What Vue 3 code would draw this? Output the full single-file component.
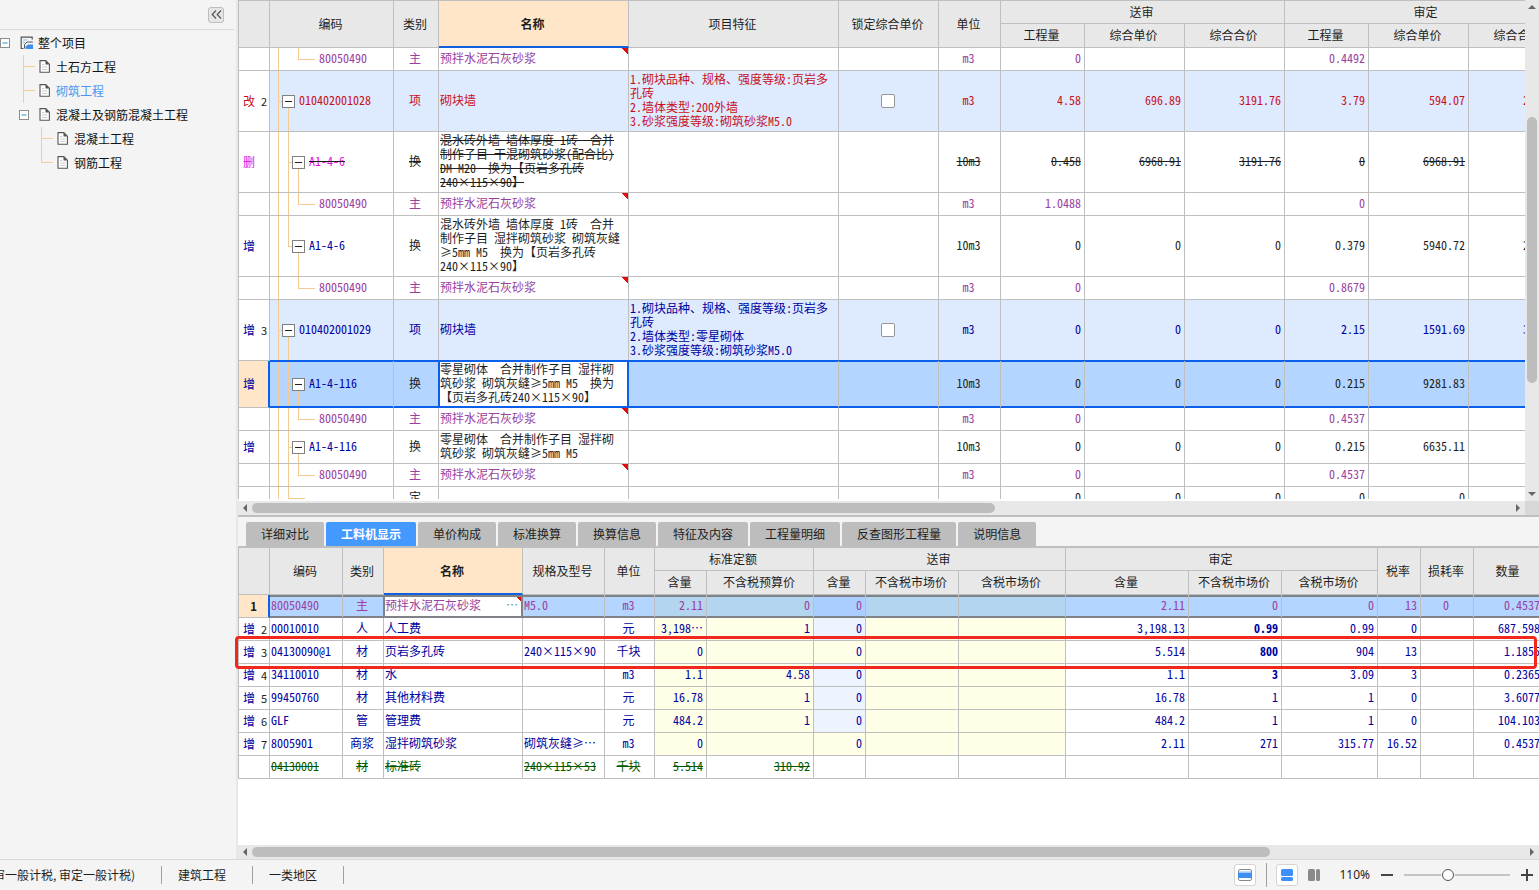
<template>
  <div class="app">
    <div class="workspace">
      <aside class="sidebar">
        <div class="sidebar-head">
          <button class="collapse-btn" type="button" aria-label="收起">
            <svg width="11" height="9" viewBox="0 0 11 9">
              <path d="M5 0.5 1.2 4.5 5 8.5M10 0.5 6.2 4.5 10 8.5" fill="none" stroke="#555" stroke-width="1.2" />
            </svg>
          </button>
        </div>
        <ul class="tree">
          <li v-for="node in treeNodes" :key="node.label" :class="['node', 'level-' + node.level]">
            <button v-if="node.toggle" class="node-toggle" type="button" :aria-label="node.label">
              <svg width="10" height="10" viewBox="0 0 10 10">
                <rect x="0.5" y="0.5" width="9" height="9" fill="#fff" stroke="#8f8f8f" />
                <path d="M2.5 5h5" stroke="#2f8fd0" />
              </svg>
            </button>
            <svg v-else class="node-guide" width="18" height="24" viewBox="0 0 18 24">
              <path :d="node.last ? 'M5.5 0V11.5H17' : 'M5.5 0V24M5.5 11.5H17'" fill="none" stroke="#f5cd94" />
            </svg>
            <svg v-if="node.level === 0" class="node-icon root-icon" width="14" height="14" viewBox="0 0 14 14">
              <path d="M3.5 12.5H1.2V1.2H12.2V3.5" fill="none" stroke="#555" stroke-width="1.2" />
              <path d="M3 4h4M3 6.5h2" stroke="#7db8f5" />
              <path d="M4.5 12.5V8.5L7 6h5.8" fill="none" stroke="#555" />
              <path d="M5.5 13V10.5L8 8.5h5V13z" fill="#3f8ff0" />
            </svg>
            <svg v-else class="node-icon" width="12" height="13" viewBox="0 0 12 13">
              <path d="M1 0.6H6.8L10.4 4.2V12.3H1z" fill="#fff" stroke="#555" stroke-width="1.1" />
              <path d="M6.5 0.5V4.5H10.5z" fill="#555" />
              <path d="M3 4.5h2M3 7h5.5M3 9.5h5.5" stroke="#ccc" />
            </svg>
            <a href="#" :class="['node-label', { active: node.active }]">{{ node.label }}</a>
          </li>
        </ul>
      </aside>

      <main class="main">
        <section class="pane-top">
          <div class="grid-view">
            <table class="grid">
              <colgroup>
                <col v-for="(w, i) in topWidths" :key="i" :style="{ width: w + 'px' }" />
              </colgroup>
              <thead>
                <tr>
                  <th rowspan="2"></th>
                  <th rowspan="2">编码</th>
                  <th rowspan="2">类别</th>
                  <th rowspan="2" class="current">名称</th>
                  <th rowspan="2">项目特征</th>
                  <th rowspan="2">锁定综合单价</th>
                  <th rowspan="2">单位</th>
                  <th colspan="3">送审</th>
                  <th colspan="3">审定</th>
                </tr>
                <tr class="sub">
                  <th v-for="(t, i) in topSub" :key="i">{{ t }}</th>
                </tr>
              </thead>
              <tbody>
                <tr v-for="(row, i) in topRows" :key="i" :class="[row.tone, { item: row.level === 1, selected: row.selected, struck: row.struck }]">
                  <td class="flag-cell">
                    <div class="flag"><span :class="row.flagTone">{{ row.flag }}</span><span class="no">{{ row.no }}</span></div>
                  </td>
                  <td :class="['code', row.guide]">
                    <div :class="['code-inner', 'indent-' + row.level]">
                      <button v-if="row.level < 3" class="fold" type="button" aria-label="折叠"></button>
                      <span :class="['code-text', row.codeTone]">{{ row.code }}</span>
                    </div>
                  </td>
                  <td class="center">{{ row.kind }}</td>
                  <td :class="['name', { note: row.level === 3 }]">{{ row.name }}</td>
                  <td class="name">{{ row.feature }}</td>
                  <td class="center"><input v-if="row.level === 1" type="checkbox" class="check" aria-label="锁定综合单价" /></td>
                  <td class="center">{{ row.unit }}</td>
                  <td v-for="(v, n) in row.values" :key="n" class="num">{{ v }}</td>
                </tr>
              </tbody>
            </table>
          </div>
          <div class="vbar">
            <svg width="8" height="4" viewBox="0 0 8 4"><path d="M4 0 8 4H0z" fill="#666" /></svg>
            <div class="vtrack"><div class="vthumb"></div></div>
            <svg width="8" height="4" viewBox="0 0 8 4"><path d="M0 0H8L4 4z" fill="#666" /></svg>
          </div>
          <div class="hbar">
            <svg width="4" height="8" viewBox="0 0 4 8"><path d="M4 0V8L0 4z" fill="#666" /></svg>
            <div class="htrack"><div class="hthumb thumb-top"></div></div>
            <svg width="4" height="8" viewBox="0 0 4 8"><path d="M0 0V8L4 4z" fill="#666" /></svg>
          </div>
          <div class="corner"></div>
        </section>

        <nav class="tabs">
          <button v-for="t in tabs" :key="t" type="button" :class="['tab', { active: t === activeTab }]" @click="activeTab = t">{{ t }}</button>
        </nav>

        <section class="pane-bottom">
          <div class="grid-view">
            <table class="grid detail">
              <colgroup>
                <col v-for="(w, i) in bottomWidths" :key="i" :style="{ width: w + 'px' }" />
              </colgroup>
              <thead>
                <tr>
                  <th rowspan="2"></th>
                  <th rowspan="2">编码</th>
                  <th rowspan="2">类别</th>
                  <th rowspan="2" class="current">名称</th>
                  <th rowspan="2">规格及型号</th>
                  <th rowspan="2">单位</th>
                  <th colspan="2">标准定额</th>
                  <th colspan="3">送审</th>
                  <th colspan="3">审定</th>
                  <th rowspan="2">税率</th>
                  <th rowspan="2">损耗率</th>
                  <th rowspan="2">数量</th>
                </tr>
                <tr class="sub">
                  <th v-for="(t, i) in bottomSub" :key="i">{{ t }}</th>
                </tr>
              </thead>
              <tbody>
                <tr v-for="(row, i) in bottomRows" :key="i" :class="[row.tone, { editing: i === 0, struck: row.struck }]">
                  <td class="flag-cell">
                    <div class="flag"><span class="add">{{ row.flag }}</span><span class="no">{{ row.no }}</span></div>
                  </td>
                  <td>{{ row.code }}</td>
                  <td class="center">{{ row.kind }}</td>
                  <td :class="{ note: i === 0, edit: i === 0 }">
                    <div class="edit-inner">{{ row.name }}<button v-if="i === 0" class="more" type="button">…</button></div>
                  </td>
                  <td>{{ row.spec }}</td>
                  <td class="center">{{ row.unit }}</td>
                  <td v-for="(v, n) in row.values" :key="n" :class="cellClass(row, n)">{{ v }}</td>
                </tr>
              </tbody>
            </table>
          </div>
          <div class="hbar">
            <svg width="4" height="8" viewBox="0 0 4 8"><path d="M4 0V8L0 4z" fill="#666" /></svg>
            <div class="htrack"><div class="hthumb thumb-bottom"></div></div>
            <svg width="4" height="8" viewBox="0 0 4 8"><path d="M0 0V8L4 4z" fill="#666" /></svg>
          </div>
          <div class="highlight"></div>
        </section>
      </main>
    </div>

    <footer class="status">
      <div class="status-item tax"><span>送审一般计税, 审定一般计税)</span></div>
      <div class="status-item">建筑工程</div>
      <div class="status-item">一类地区</div>
      <div class="tools">
        <button class="tool framed" type="button" aria-label="单窗格">
          <svg width="14" height="12" viewBox="0 0 14 12">
            <rect x="0.5" y="0.5" width="13" height="11" rx="1.5" fill="#fff" stroke="#8a8a8a" />
            <path d="M0 3.5H14V9H0z" fill="#3f8ff0" />
            <path d="M1 2.8h12" stroke="#a9d0ff" />
          </svg>
        </button>
        <span class="tool-sep"></span>
        <button class="tool framed" type="button" aria-label="上下布局">
          <svg width="12" height="12" viewBox="0 0 12 12">
            <rect width="12" height="7" rx="1.5" fill="#3f8ff8" />
            <rect y="8" width="12" height="4" rx="1.5" fill="#3f8ff8" />
          </svg>
        </button>
        <button class="tool" type="button" aria-label="左右布局">
          <svg width="12" height="12" viewBox="0 0 12 12">
            <rect width="7" height="12" rx="1.5" fill="#8a8a8a" />
            <rect x="8" width="4" height="12" rx="1.5" fill="#8a8a8a" />
          </svg>
        </button>
        <span class="zoom-text">110%</span>
        <button class="zoom-btn" type="button" aria-label="缩小">
          <svg width="12" height="12" viewBox="0 0 12 12"><path d="M0 6H12" stroke="#444" stroke-width="2" /></svg>
        </button>
        <input v-model="zoom" class="zoom-range" type="range" min="0" max="100" aria-label="缩放" />
        <button class="zoom-btn" type="button" aria-label="放大">
          <svg width="12" height="12" viewBox="0 0 12 12"><path d="M0 6H12M6 0V12" stroke="#444" stroke-width="2" /></svg>
        </button>
      </div>
    </footer>
  </div>
</template>

<script setup>
import { ref } from "vue";

const zoom = ref(40);
const activeTab = ref("工料机显示");
const tabs = ["详细对比", "工料机显示", "单价构成", "标准换算", "换算信息", "特征及内容", "工程量明细", "反查图形工程量", "说明信息"];

const treeNodes = [
  { label: "整个项目", level: 0, toggle: true },
  { label: "土石方工程", level: 1 },
  { label: "砌筑工程", level: 1, active: true },
  { label: "混凝土及钢筋混凝土工程", level: 1, toggle: true },
  { label: "混凝土工程", level: 2 },
  { label: "钢筋工程", level: 2, last: true },
];

const topWidths = [32, 124, 45, 190, 210, 100, 62, 84, 100, 100, 84, 100, 100];
const topSub = ["工程量", "综合单价", "综合合价", "工程量", "综合单价", "综合合价"];

// 主材行
const material = (guide, a, b) => ({
  level: 3, guide, tone: "purple", code: "80050490", kind: "主", name: "预拌水泥石灰砂浆", unit: "m3",
  values: [a, "", "", b, "", ""],
});

const topRows = [
  material("leaf", "0", "0.4492"),
  {
    level: 1, guide: "open-1", tone: "red", flag: "改", flagTone: "red", no: 2, code: "010402001028", kind: "项", name: "砌块墙",
    feature: "1.砌块品种、规格、强度等级:页岩多\n孔砖\n2.墙体类型:200外墙\n3.砂浆强度等级:砌筑砂浆M5.0",
    unit: "m3", values: ["4.58", "696.89", "3191.76", "3.79", "594.07", "2251.53"],
  },
  {
    level: 2, guide: "open-2", struck: true, flag: "删", flagTone: "magenta", code: "A1-4-6", codeTone: "magenta", kind: "换",
    name: "混水砖外墙 墙体厚度 1砖  合并\n制作子目 干混砌筑砂浆(配合比)\nDM M20  换为【页岩多孔砖\n240×115×90】",
    unit: "10m3", values: ["0.458", "6968.91", "3191.76", "0", "6968.91", ""],
  },
  material("leaf-more", "1.0488", "0"),
  {
    level: 2, guide: "open-2-last", flag: "增", flagTone: "add", code: "A1-4-6", codeTone: "add", kind: "换",
    name: "混水砖外墙 墙体厚度 1砖  合并\n制作子目 湿拌砌筑砂浆 砌筑灰缝\n≥5mm M5  换为【页岩多孔砖\n240×115×90】",
    unit: "10m3", values: ["0", "0", "0", "0.379", "5940.72", "2251.53"],
  },
  material("leaf", "0", "0.8679"),
  {
    level: 1, guide: "open-1", tone: "blue", flag: "增", flagTone: "add", no: 3, code: "010402001029", kind: "项", name: "砌块墙",
    feature: "1.砌块品种、规格、强度等级:页岩多\n孔砖\n2.墙体类型:零星砌体\n3.砂浆强度等级:砌筑砂浆M5.0",
    unit: "m3", values: ["0", "0", "0", "2.15", "1591.69", "3422.13"],
  },
  {
    level: 2, guide: "open-2", selected: true, flag: "增", flagTone: "add", code: "A1-4-116", codeTone: "add", kind: "换",
    name: "零星砌体  合并制作子目 湿拌砌\n筑砂浆 砌筑灰缝≥5mm M5  换为\n【页岩多孔砖240×115×90】",
    unit: "10m3", values: ["0", "0", "0", "0.215", "9281.83", ""],
  },
  material("leaf-more", "0", "0.4537"),
  {
    level: 2, guide: "open-2", flag: "增", flagTone: "add", code: "A1-4-116", codeTone: "add", kind: "换",
    name: "零星砌体  合并制作子目 湿拌砌\n筑砂浆 砌筑灰缝≥5mm M5",
    unit: "10m3", values: ["0", "0", "0", "0.215", "6635.11", ""],
  },
  material("leaf-more", "0", "0.4537"),
  { level: 4, guide: "tail", kind: "定", values: ["0", "0", "0", "0", "0", ""] },
];

const bottomWidths = [32, 73, 41, 139, 82, 50, 52, 107, 52, 93, 107, 123, 93, 96, 43, 53, 70];
const bottomSub = ["含量", "不含税预算价", "含量", "不含税市场价", "含税市场价", "含量", "不含税市场价", "含税市场价"];

const bottomRows = [
  { no: 1, tone: "purple", code: "80050490", kind: "主", name: "预拌水泥石灰砂浆", spec: "M5.0", unit: "m3", values: ["2.11", "0", "0", "", "", "2.11", "0", "0", "13", "0", "0.4537"] },
  { flag: "增", no: 2, tone: "blue", bold: true, code: "00010010", kind: "人", name: "人工费", unit: "元", values: ["3,198…", "1", "0", "", "", "3,198.13", "0.99", "0.99", "0", "", "687.598"] },
  { flag: "增", no: 3, tone: "blue", bold: true, fixed: true, code: "04130090@1", kind: "材", name: "页岩多孔砖", spec: "240×115×90", unit: "千块", values: ["0", "", "0", "", "", "5.514", "800", "904", "13", "", "1.1855"] },
  { flag: "增", no: 4, tone: "blue", bold: true, code: "34110010", kind: "材", name: "水", unit: "m3", values: ["1.1", "4.58", "0", "", "", "1.1", "3", "3.09", "3", "", "0.2365"] },
  { flag: "增", no: 5, tone: "blue", code: "99450760", kind: "材", name: "其他材料费", unit: "元", values: ["16.78", "1", "0", "", "", "16.78", "1", "1", "0", "", "3.6077"] },
  { flag: "增", no: 6, tone: "blue", code: "GLF", kind: "管", name: "管理费", unit: "元", values: ["484.2", "1", "0", "", "", "484.2", "1", "1", "0", "", "104.103"] },
  { flag: "增", no: 7, tone: "blue", fixed: true, code: "8005901", kind: "商浆", name: "湿拌砌筑砂浆", spec: "砌筑灰缝≥…", unit: "m3", values: ["0", "", "0", "", "", "2.11", "271", "315.77", "16.52", "", "0.4537"] },
  { tone: "green", struck: true, code: "04130001", kind: "材", name: "标准砖", spec: "240×115×53", unit: "千块", values: ["5.514", "310.92", "", "", "", "", "", "", "", "", ""] },
];

// 浅黄为只读列，浅蓝为送审含量列
function cellClass(row, n) {
  return {
    num: n !== 9,
    center: n === 9,
    readonly: !row.struck && (n < 5 && (n !== 2 || row.fixed)),
    amount: !row.struck && n === 2 && !row.fixed,
    strong: row.bold && n === 6,
  };
}
</script>

<style>
body {
  margin: 0;
}
</style>

<style scoped>
* {
  box-sizing: border-box;
}

.app {
  display: flex;
  flex-direction: column;
  height: 100vh;
  overflow: hidden;
  background: #f4f4f4;
  color: #1e1e1e;
  font-family: "Noto Sans CJK SC", sans-serif;
  font-size: 12px;
  line-height: 14px;
}

button {
  padding: 0;
  border: 0;
  background: none;
  color: inherit;
  font: inherit;
}

svg {
  display: block;
  flex: none;
}

.workspace {
  display: flex;
  flex: 1;
  min-height: 0;
}

/* 左侧工程树 */
.sidebar {
  flex: 0 0 238px;
  border-right: 2px solid #e8e8e8;
}

.sidebar-head {
  display: flex;
  align-items: center;
  justify-content: flex-end;
  height: 30px;
  margin-right: 2px;
  padding-right: 10px;
  border-bottom: 1px solid #dcdcdc;
}

.collapse-btn {
  display: flex;
  align-items: center;
  justify-content: center;
  width: 16px;
  height: 16px;
  border: 1px solid #bdbdbd;
  border-radius: 3px;
  background: #e6e6e6;
}

.tree {
  margin: 0;
  padding: 1px 0 0;
  list-style: none;
}

.node {
  display: flex;
  align-items: center;
  height: 24px;
}

.level-1 {
  padding-left: 18px;
}

.level-2 {
  padding-left: 36px;
}

.node-toggle,
.node-guide {
  flex: none;
  width: 18px;
}

.node-toggle {
  padding-left: 1px;
}

.level-0 .node-toggle {
  padding-left: 0;
}

.node-icon {
  margin: 0 5px 2px 3px;
}

.root-icon {
  margin: 0 4px 0 2px;
}

.node-label {
  color: #111;
  text-decoration: none;
  white-space: nowrap;
}

.node-label.active {
  color: #4a96f0;
}

/* 表格 */
.main {
  display: flex;
  flex: 1;
  flex-direction: column;
  min-width: 0;
}

.pane-top {
  display: grid;
  flex: 0 0 calc(60% + 1px);
  grid-template-rows: minmax(0, 1fr) 14px;
  grid-template-columns: minmax(0, 1fr) 14px;
  min-height: 0;
  border-bottom: 2px solid #bfbfbf;
  background: #fff;
}

.grid-view {
  min-height: 0;
  overflow: hidden;
}

.pane-top .grid-view {
  margin-bottom: 2px;
  border-top: 1px solid #bfbfbf;
}

.grid {
  width: 0;
  border-collapse: separate;
  border-spacing: 0;
  table-layout: fixed;
  font-family: "Noto Sans Mono CJK SC", "Noto Sans CJK SC", monospace;
}

.grid th,
.grid td {
  height: 23px;
  padding: 0 3px 0 1px;
  border-right: 1px solid #bfbfbf;
  border-bottom: 1px solid #bfbfbf;
  overflow: hidden;
  white-space: pre;
}

.grid td {
  padding-bottom: 2px;
  text-align: left;
}

.grid thead tr:first-child > :first-child,
.flag-cell {
  border-left: 1px solid #bfbfbf;
}

.grid th {
  background: #e8e8e8;
  font-weight: 400;
}

.grid .sub th {
  height: 24px;
  padding-bottom: 2px;
}

.grid th.current {
  border-bottom: 2px solid #1060e0;
  background: #ffe6c9;
  font-weight: 700;
}

.grid .flag-cell {
  padding: 0;
}

.grid .center {
  text-align: center;
}

.grid .num {
  text-align: right;
}

.grid .name {
  padding: 1px 0 3px 1px;
}

.grid .item td:not(.flag-cell) {
  background-color: #deeafd;
}

.purple {
  color: #9940a0;
}

.red {
  color: #c8101c;
}

.blue,
.add {
  color: #0000a0;
}

.magenta {
  color: #e010e0;
}

.green {
  color: #005a00;
}

.struck td:not(.flag-cell) {
  text-decoration: line-through;
}

.flag {
  display: flex;
  align-items: center;
  justify-content: space-between;
  padding: 0 2px 0 4px;
}

.no {
  color: #222;
  font-family: "Noto Sans CJK SC", sans-serif;
  font-size: 11px;
}

.grid .note {
  background-image: linear-gradient(to top right, transparent 50%, #e01010 50%);
  background-repeat: no-repeat;
  background-position: right top;
  background-size: 7px 6px;
}

/* 编码列的层级连线 */
.grid .code {
  --mid-size: 0;
  --mid-pos: 0;
  --deep-size: 0;
  --deep-pos: 0;
  --arm-size: 0;
  --arm-pos: 0;
  --line: linear-gradient(#f3cb92, #f3cb92);
  padding: 0;
  background-image: var(--line), var(--line), var(--line), var(--line);
  background-repeat: no-repeat;
  background-position: 8px 0, 18px var(--mid-pos), 28px var(--deep-pos), var(--arm-pos) 50%;
  background-size: 1px 100%, 1px var(--mid-size), 1px var(--deep-size), var(--arm-size) 1px;
}

.grid .leaf,
.grid .leaf-more {
  --deep-size: 50%;
  --arm-size: 17px;
  --arm-pos: 28px;
}

.grid .leaf-more {
  --mid-size: 100%;
}

.grid .open-1 {
  --mid-size: 50%;
  --mid-pos: 100%;
  --arm-size: 5px;
  --arm-pos: 8px;
}

.grid .open-2,
.grid .open-2-last {
  --mid-size: 100%;
  --deep-size: 50%;
  --deep-pos: 100%;
  --arm-size: 5px;
  --arm-pos: 18px;
}

.grid .open-2-last {
  --mid-size: 50%;
}

.grid .tail {
  --mid-size: 50%;
  --arm-size: 17px;
  --arm-pos: 18px;
}

.code-inner {
  display: flex;
  align-items: center;
  gap: 4px;
}

.code-text {
  padding-bottom: 2px;
}

.indent-1 {
  padding-left: 12px;
}

.indent-2 {
  padding-left: 22px;
}

.indent-3 {
  padding-left: 49px;
}

.fold {
  flex: none;
  width: 13px;
  height: 13px;
  border: 1px solid #808080;
  background: linear-gradient(#222, #222) center / 7px 1px no-repeat #fff;
}

.check {
  display: block;
  width: 14px;
  height: 14px;
  margin: 2px auto 0;
  border: 1px solid #969696;
  border-radius: 2px;
  background: #fff;
  appearance: none;
}

.selected td:not(.flag-cell) {
  border-bottom-color: #0a60e8;
  background-color: #b4d5ff;
  box-shadow: 0 -1px #0a60e8, inset 0 1px #0a60e8, inset 0 -1px #0a60e8;
}

.grid .selected .flag-cell {
  border-right: 2px solid #0a60e8;
  background: #ffe6c9;
}

.grid .selected td:nth-child(3) {
  border-right-color: #0a60e8;
}

.grid .selected td:nth-child(4) {
  border-right: 2px solid #0a60e8;
  background-color: #fff;
  box-shadow: 0 -1px #0a60e8, inset 1px 1px #0a60e8, inset 0 -1px #0a60e8;
}

/* 滚动条 */
.vbar,
.hbar {
  display: flex;
  align-items: center;
  background: #e8e8e8;
}

.vbar {
  flex-direction: column;
  padding: 5px 0;
}

.hbar {
  flex: none;
  height: 14px;
  padding: 0 5px;
}

.vtrack {
  flex: 1;
  width: 10px;
}

.vthumb {
  height: 55%;
  margin-top: 108px;
  border-radius: 5px;
  background: #bdbdbd;
}

.htrack {
  flex: 1;
  padding: 0 5px;
}

.hthumb {
  height: 10px;
  border-radius: 5px;
  background: #bdbdbd;
}

.thumb-top {
  width: 59%;
}

.thumb-bottom {
  width: 80%;
}

.corner {
  background: #d8d8d8;
}

/* 页签 */
.tabs {
  display: flex;
  flex: none;
  gap: 2px;
  padding: 5px 8px 0;
  border-bottom: 2px solid #bfbfbf;
}

.tab {
  height: 24px;
  padding: 0 15px;
  border-radius: 2px 2px 0 0;
  background: #bdbdbd;
  color: #222;
  white-space: nowrap;
}

.tab.active {
  background: #4499ff;
  color: #fff;
  font-weight: 700;
}

.pane-bottom {
  position: relative;
  display: flex;
  flex: 1;
  flex-direction: column;
  min-height: 0;
  padding-bottom: 1px;
  background: #fff;
}

.pane-bottom .grid-view {
  flex: 1;
}

.detail .readonly {
  background: #ffffe8;
}

.detail .amount {
  background: #edf3ff;
}

.detail .strong {
  font-weight: 700;
}

.detail .editing td:not(.flag-cell) {
  border-bottom-color: #7f8388;
  background-color: #b4d5ff;
  box-shadow: inset 0 2px #7f8388, inset 0 -1px #7f8388;
}

.detail .editing .flag-cell {
  border-right: 2px solid #1060e0;
  background: #ffe6c9;
}

.editing .flag {
  justify-content: center;
  padding: 0;
}

.editing .no {
  font-size: 12px;
  font-weight: 700;
}

.detail .editing td.readonly {
  background-color: #b3d5f0;
}

.detail .editing td.amount {
  background-color: #aaceff;
}

.detail .editing td:nth-child(3) {
  border-right-color: #7f8388;
}

.detail .editing td.edit {
  border-right: 2px solid #7f8388;
  background-color: #fff;
  box-shadow: inset 1px 2px #7f8388, inset 0 -1px #7f8388;
}

.edit-inner {
  display: flex;
  justify-content: space-between;
}

.struck .edit-inner {
  display: block;
}

.more {
  color: #5a8ca0;
}

.highlight {
  position: absolute;
  top: 88px;
  right: 2px;
  left: -3px;
  height: 33px;
  border: 3px solid #f0281e;
  border-radius: 4px;
  pointer-events: none;
}

/* 状态栏 */
.status {
  position: relative;
  display: flex;
  flex: none;
  align-items: center;
  height: 30px;
  background: #f4f4f4;
  box-shadow: 0 -1px #d8d8d8;
}

.status-item {
  flex: none;
  padding: 0 26px 0 16px;
  border-right: 1px solid #a0a0a0;
  line-height: 18px;
  white-space: nowrap;
}

.tax {
  display: flex;
  justify-content: flex-end;
  width: 162px;
  padding-left: 0;
  overflow: hidden;
}

.tools {
  display: flex;
  align-items: center;
  margin-left: auto;
  padding-right: 6px;
}

.tool {
  display: flex;
  align-items: center;
  justify-content: center;
  width: 22px;
  height: 22px;
}

.framed {
  border: 1px solid #d4d4d4;
  border-radius: 3px;
  background: #fff;
}

.tool-sep {
  width: 1px;
  height: 24px;
  margin: 0 9px 0 10px;
  background: #a0a0a0;
}

.framed + .tool {
  margin-left: 5px;
}

.zoom-text {
  margin: 0 11px 0 14px;
  font-family: "Noto Sans", sans-serif;
}

.zoom-range {
  width: 106px;
  height: 14px;
  margin: 0 11px;
  background: linear-gradient(#c4c4c4, #c4c4c4) center / 100% 2px no-repeat;
  appearance: none;
}

.zoom-range::-webkit-slider-thumb {
  width: 12px;
  height: 12px;
  border: 1px solid #555;
  border-radius: 50%;
  background: #fff;
  box-shadow: 0 0 0 1px #f4f4f4;
  appearance: none;
}
</style>
